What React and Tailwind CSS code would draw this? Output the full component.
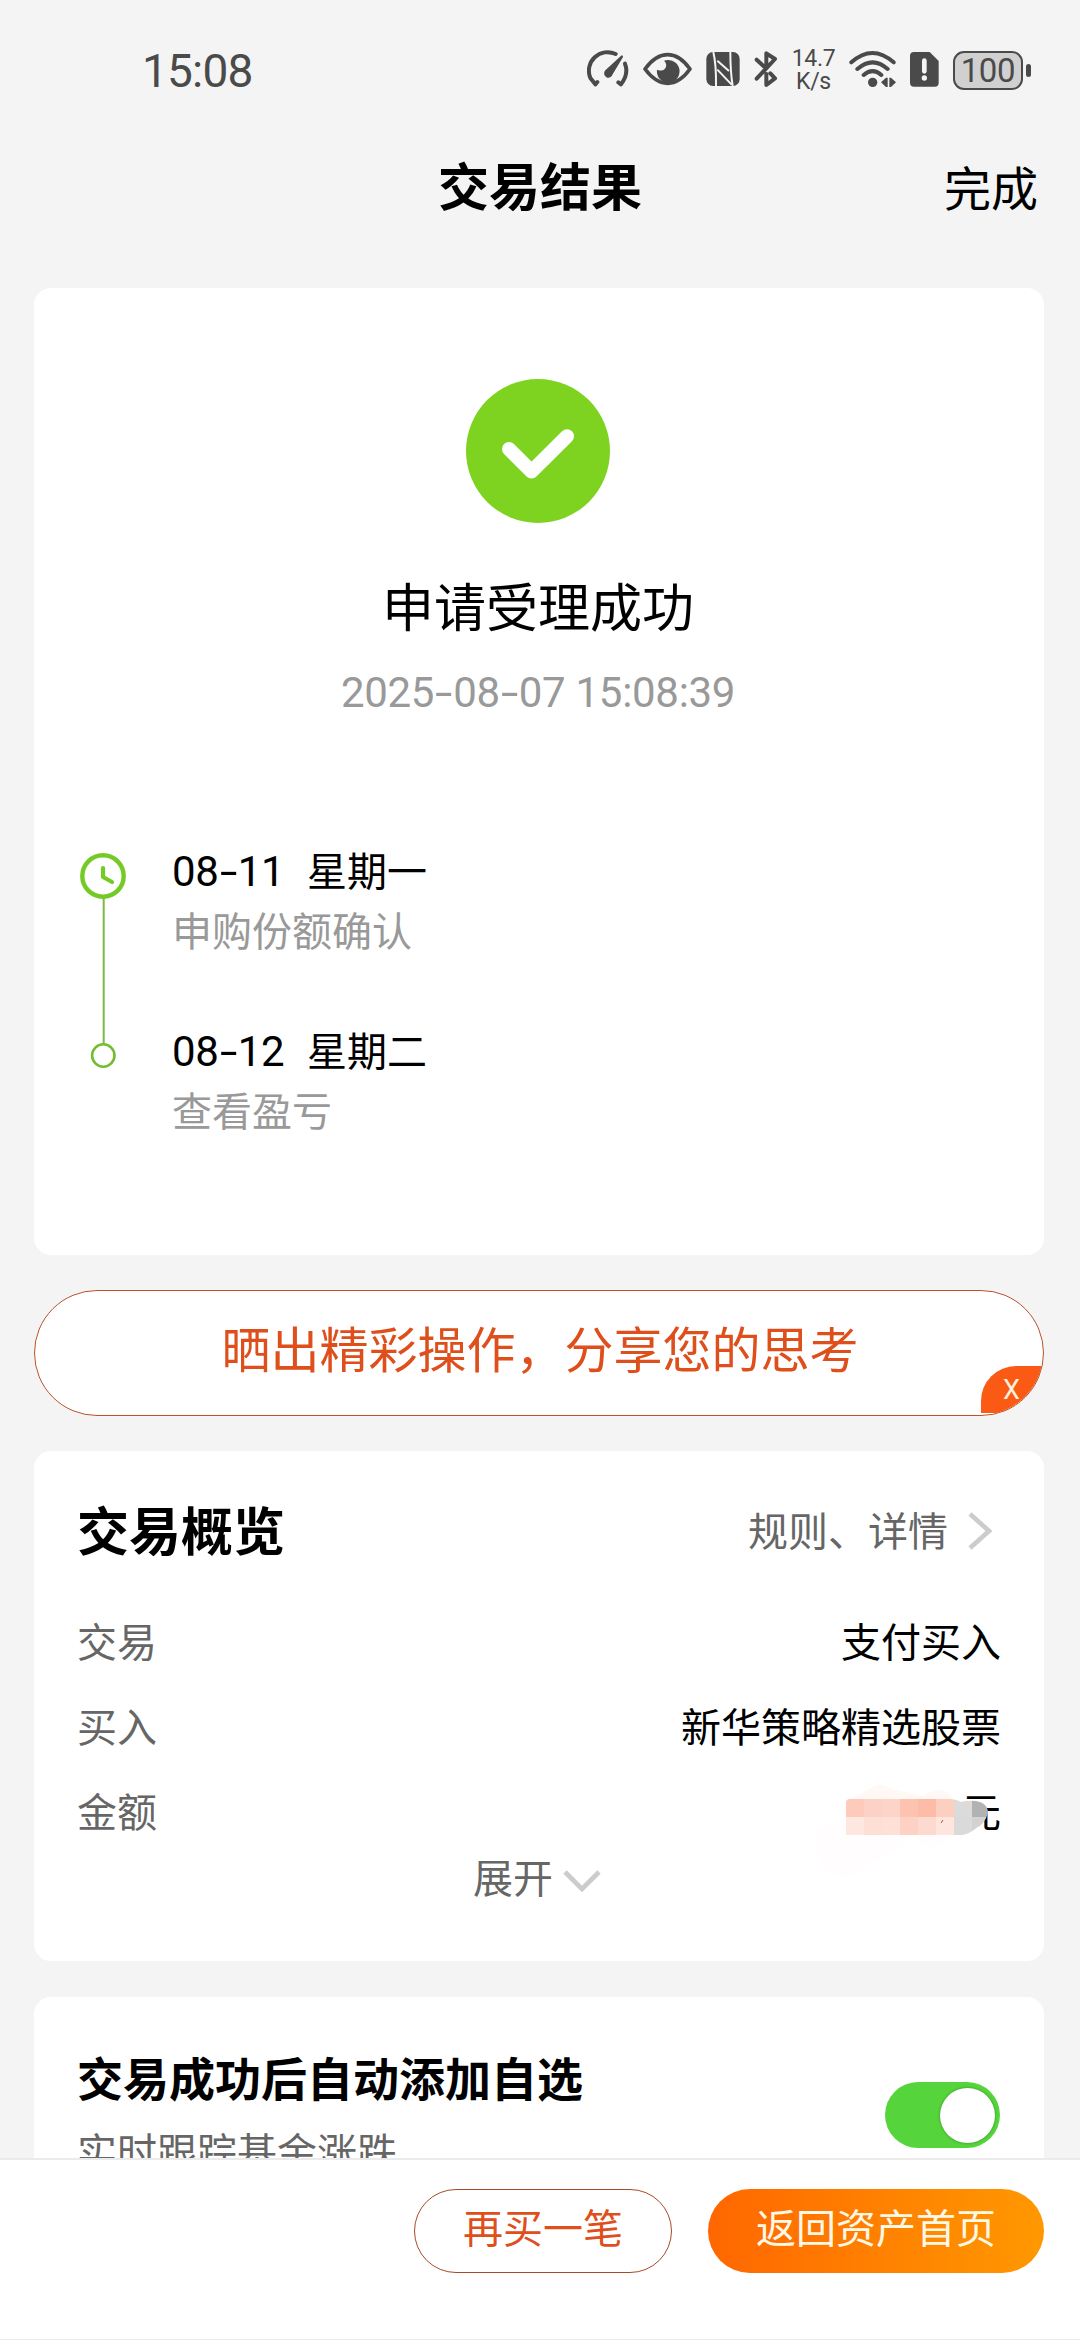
import React, { useState } from "react";

const steps = [
    { date: "08-11", day: "星期一", text: "申购份额确认" },
    { date: "08-12", day: "星期二", text: "查看盈亏" },
];

const mosaic = [
    ["#fdcabb", "#fcd2c6", "#fdd4c8", "#fdc2b0", "#fdbca8", "#fccfc1", "#dbdbdb", "#b2b2b2"],
    ["#fee7e0", "#fedfd6", "#fee0d7", "#fdd1c3", "#fddacf", "#fee5dd", "#dadada", "#d2d2d2"],
];

// angka dengan tanda hubung lebar
const Digits = ({ value }) => (
    <div className="h-[60px] pt-[3px] font-['Roboto',sans-serif] text-[42px] leading-[60px] tracking-[-0.3px] whitespace-nowrap">
        {value.split("").map((char, index) =>
            char === "-" ? (
                <span key={index} className="inline-block w-[19px] scale-x-150 text-center">
                    -
                </span>
            ) : (
                <span key={index}>{char}</span>
            )
        )}
    </div>
);

const StatusBar = () => (
    <div className="flex h-[140px] items-center justify-between pr-[49px] pl-[142px] font-['Roboto',sans-serif] text-[#4a4a4a]">
        <div className="pt-px text-[46px] leading-none tracking-[-0.8px]">15:08</div>
        <div className="flex items-center gap-[14px]">
            <svg className="h-[46px] w-[42px]" viewBox="78 51 126 138" fill="none">
                <path
                    d="M164 72 A56 56 0 0 0 88 144 L103 163 L109 156"
                    stroke="currentColor"
                    strokeWidth="12"
                    strokeLinecap="round"
                    strokeLinejoin="round"
                />
                <path
                    d="M192 101 Q204 132 180 163 L172 157"
                    stroke="currentColor"
                    strokeWidth="12"
                    strokeLinecap="round"
                    strokeLinejoin="round"
                />
                <path d="M182 76 Q187 76 186 81 L155 133 A13 13 0 1 1 133 121 Z" fill="currentColor" />
            </svg>
            <svg className="h-[46px] w-[49px]" viewBox="246 51 147 138" fill="none">
                <path
                    d="M252 117 Q284 74 320 74 Q356 74 387 117 Q356 160 320 160 Q284 160 252 117 Z"
                    stroke="currentColor"
                    strokeWidth="11"
                    strokeLinejoin="round"
                />
                <path
                    d="M318 90 A34 34 0 1 1 288 119 Q306 126 313 115 Q320 102 309 92 Z"
                    fill="currentColor"
                />
            </svg>
            <svg className="h-[46px] w-[34px]" viewBox="435 51 102 138" fill="none">
                <rect x="436" y="66" width="100" height="102" rx="20" fill="currentColor" />
                <path
                    d="M457 66 Q466 105 465 168 M515 168 Q508 125 508 66"
                    stroke="#f4f4f4"
                    strokeWidth="6"
                />
                <path
                    d="M469 92 L504 123 M469 119 L512 164"
                    stroke="#f4f4f4"
                    strokeWidth="6"
                />
            </svg>
            <svg className="h-[46px] w-[24px]" viewBox="579 51 72 138" fill="none">
                <path
                    d="M587 89 L614 114 M616 102 V70 L642 87 L587 146 M616 132 V165 L642 145 L628 130"
                    stroke="currentColor"
                    strokeWidth="12"
                    strokeLinecap="round"
                    strokeLinejoin="round"
                />
            </svg>
            <div className="flex w-[43px] flex-col items-center text-[23px] leading-[23px] tracking-[-0.3px] whitespace-nowrap">
                <div>14.7</div>
                <div>K/s</div>
            </div>
            <svg className="h-[46px] w-[47px]" viewBox="864 51 141 138" fill="none">
                <path
                    d="M871 97 Q934 41 998 97 M889 117 Q935 77 980 117 M908 135 Q935 112 961 135"
                    stroke="currentColor"
                    strokeWidth="12"
                    strokeLinecap="round"
                />
                <circle cx="935" cy="157" r="14" fill="currentColor" />
                <path
                    d="M960 157 L975 143 V171 Z M1005 157 L990 143 V171 Z M975 143 H980 V171 H975 Z M985 143 H990 V171 H985 Z"
                    fill="currentColor"
                />
            </svg>
            <svg className="h-[46px] w-[29px]" viewBox="1047 51 87 138">
                <path
                    d="M1059 66 H1106 L1133 93 V158 Q1133 170 1121 170 H1059 Q1047 170 1047 158 V78 Q1047 66 1059 66 Z"
                    fill="currentColor"
                />
                <path d="M1090 92 V124" stroke="#f4f4f4" strokeWidth="14" strokeLinecap="round" />
                <circle cx="1090" cy="144" r="8" fill="#f4f4f4" />
            </svg>
            <div className="flex items-center gap-[3px]">
                <div className="flex h-[39px] w-[70px] items-center justify-center rounded-[11px] border-[2.5px] border-[#4a4a4a] bg-[#d0d0d0] text-[33px] leading-none tracking-[-0.3px]">
                    100
                </div>
                <div className="h-[13px] w-[5px] rounded-full bg-[#4a4a4a]"></div>
            </div>
        </div>
    </div>
);

export default function App() {
    const [checked, setChecked] = useState(true);

    return (
        <main className="flex h-[2340px] w-[1080px] flex-col overflow-hidden bg-[#f4f4f4] font-['Noto_Sans_CJK_SC',sans-serif] text-[40px] leading-[60px] text-black">
            <StatusBar />
            <header className="grid h-[88px] shrink-0 grid-cols-3 items-center pr-[42px] pl-[42px]">
                <div></div>
                <h1 className="-mt-px text-center text-[51px] font-bold">交易结果</h1>
                <div className="pt-[3px] text-right text-[47px]">完成</div>
            </header>

            <div className="mt-[60px] flex h-[1870px] shrink-0 flex-col gap-[36px] overflow-hidden pr-[36px] pl-[34px]">
                <section className="flex h-[967px] shrink-0 flex-col items-center rounded-[17px] bg-white pt-[91px] pr-[2px]">
                    <svg className="h-[144px] w-[144px] shrink-0" viewBox="0 0 144 144" fill="none">
                        <circle cx="72" cy="72" r="72" fill="#7ed321" />
                        <path
                            d="M43 70 L65.5 92.5 L101 57.3"
                            stroke="white"
                            strokeWidth="14"
                            strokeLinecap="round"
                            strokeLinejoin="round"
                        />
                    </svg>
                    <div className="mt-[52px] text-[52px]">申请受理成功</div>
                    <div className="mt-[25px] text-[#999]">
                        <Digits value="2025-08-07 15:08:39" />
                    </div>
                    <div className="mt-[119px] flex w-full pl-[46px]">
                        <svg className="h-[240px] w-[46px] shrink-0" viewBox="0 0 46 240" fill="none">
                            <path d="M23.7 59 V217" stroke="#7cb942" strokeWidth="2" />
                            <circle cx="23" cy="37" r="20.7" stroke="#76ca25" strokeWidth="4.4" />
                            <path
                                d="M23 29 V38 L32 43"
                                stroke="#76ca25"
                                strokeWidth="4.2"
                                strokeLinecap="round"
                                strokeLinejoin="round"
                            />
                            <circle cx="23.3" cy="216.5" r="11.2" fill="white" stroke="#74bd30" strokeWidth="2.6" />
                        </svg>
                        <div className="flex flex-col gap-[60px] pl-[46px]">
                            {steps.map((step) => (
                                <div key={step.date}>
                                    <div className="flex h-[60px]">
                                        <div className="w-[135px]">
                                            <Digits value={step.date} />
                                        </div>
                                        <div>{step.day}</div>
                                    </div>
                                    <div className="h-[60px] text-[#999]">{step.text}</div>
                                </div>
                            ))}
                        </div>
                    </div>
                </section>

                <section className="relative -my-px flex h-[126px] shrink-0 items-center justify-center overflow-hidden rounded-full border border-[#b9522d] bg-white text-[49px] text-[#de4f1b]">
                    <div className="-mt-[13px] pl-[2px]">晒出精彩操作，分享您的思考</div>
                    <div className="absolute right-0 bottom-[2px] flex h-[47px] w-[62px] items-center rounded-tl-[35px] bg-[#fa5a14] pl-[22px] font-['Roboto',sans-serif] text-[27px] text-[#fff3e0]">
                        X
                    </div>
                </section>

                <section className="flex h-[510px] shrink-0 flex-col rounded-[17px] bg-white pt-[47px] pr-[43px] pl-[43px] text-[#666]">
                    <div className="flex items-center justify-between">
                        <h2 className="text-[52px] font-bold text-black">交易概览</h2>
                        <div className="flex items-center pt-px pr-[9px]">
                            <div>规则、详情</div>
                            <svg className="mt-1 ml-[20px] h-[38px] w-[24px]" viewBox="0 0 24 38" fill="none">
                                <path d="M2 2 L21 19 L2 36" stroke="#ccc" strokeWidth="4.6" />
                            </svg>
                        </div>
                    </div>
                    <div className="mt-[51px] flex flex-col gap-[25px]">
                        <div className="flex h-[60px] justify-between">
                            <div>交易</div>
                            <div className="text-black">支付买入</div>
                        </div>
                        <div className="flex h-[60px] justify-between">
                            <div>买入</div>
                            <div className="text-black">新华策略精选股票</div>
                        </div>
                        <div className="flex h-[60px] justify-between">
                            <div>金额</div>
                            <div className="relative text-black">
                                元
                                <svg
                                    className="absolute top-[5px] -left-[148px] h-[100px] w-[176px]"
                                    viewBox="0 0 176 100">
                                    <defs>
                                        <clipPath id="smudge">
                                            <path d="M33 18 Q33 14 37 14 H136 Q143 14 148 17 Q155 15 163 16 Q175 18 175 28 Q172 39 162 44 Q157 50 150 50 H33 Z" />
                                        </clipPath>
                                    </defs>
                                    <path d="M36 14 Q50 8 58 3 Q68 -4 78 4 L110 11 Q124 2 136 8 L139 14 Z" fill="#fff8f5" />
                                    <path d="M33 50 H138 Q126 66 112 60 L100 52 Q60 80 30 94 Q0 80 2 50 Q10 38 33 36 Z" fill="#fffdfd" />
                                    <g clipPath="url(#smudge)">
                                        {/* 元 tertutup sebagian */}
                                        {mosaic.map((row, y) =>
                                            row.map((color, x) => (
                                                <rect
                                                    key={`${x}-${y}`}
                                                    x={33 + x * 18}
                                                    y={14 + y * 18}
                                                    width="18"
                                                    height="18"
                                                    fill={color}
                                                />
                                            ))
                                        )}
                                    </g>
                                    <path d="M150 50 Q158 48 165 42 L169 50 L160 54 Z" fill="white" />
                                    <path d="M130 35 L128 38" stroke="#c0563a" strokeWidth="1" />
                                </svg>
                            </div>
                        </div>
                    </div>
                    <div className="mt-[6px] flex items-center justify-center pr-[4px]">
                        <div>展开</div>
                        <svg className="mt-[9px] ml-[10px] h-[22px] w-[38px]" viewBox="0 0 38 22" fill="none">
                            <path d="M2 2 L19 19 L36 2" stroke="#ccc" strokeWidth="4.6" />
                        </svg>
                    </div>
                </section>

                <section className="flex h-[260px] shrink-0 justify-between rounded-[17px] bg-white pr-[44px] pl-[43px]">
                    <div className="pt-[49px]">
                        <h2 className="text-[46px] font-bold">交易成功后自动添加自选</h2>
                        <div className="mt-[14px] text-[#666]">实时跟踪基金涨跌</div>
                    </div>
                    <button
                        type="button"
                        onClick={() => setChecked(!checked)}
                        className={`mt-[85px] flex h-[66px] w-[115px] items-center rounded-full px-[5px] ${
                            checked ? "justify-end bg-[#55d53b]" : "justify-start bg-gray-300"
                        }`}>
                        <span className="h-[55px] w-[55px] rounded-full bg-white shadow-[0_0_3px_rgba(0,0,0,0.35)]"></span>
                    </button>
                </section>
            </div>

            <footer className="flex h-[182px] shrink-0 items-start justify-end gap-[36px] border-t-2 border-b border-[#ebebeb] bg-white pt-[29px] pr-[36px]">
                <button
                    type="button"
                    className="flex h-[84px] w-[258px] items-center justify-center rounded-full border border-[#a84a28] pb-[10px] text-[#de4f1b]">
                    再买一笔
                </button>
                <button
                    type="button"
                    className="flex h-[84px] w-[336px] items-center justify-center rounded-full bg-linear-to-r from-[#ff6600] to-[#ff9800] pb-[10px] text-[#fff8e6]">
                    返回资产首页
                </button>
            </footer>
        </main>
    );
}
